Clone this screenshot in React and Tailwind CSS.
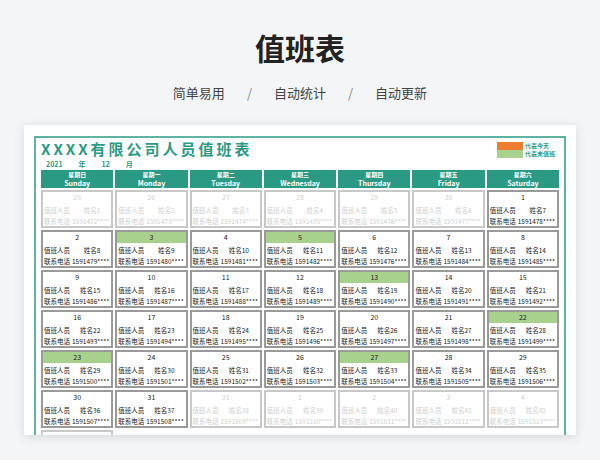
const days=[["星期日","Sunday"],["星期一","Monday"],["星期二","Tuesday"],["星期三","Wednesday"],["星期四","Thursday"],["星期五","Friday"],["星期六","Saturday"]];
const dates=[25,26,27,28,29,30,1,...Array.from({length:30},(_,i)=>i+2),31,1,2,3,4,5];
const green=[3,5,13,22,23,27];
export default function App(){
  return(
  <div className="w-[600px] h-[460px] bg-[#f4f5f7] overflow-hidden" style={{fontFamily:'"Noto Sans CJK SC","Noto Sans",sans-serif'}}>
    <div className="h-[62px] flex items-end justify-center text-[30px] font-bold text-[#222] leading-none">值班表</div>
    <div className="flex justify-center gap-[22px] text-[13px] text-[#444] h-[20px] items-center mt-[21px]">
      <span>简单易用</span><span className="text-[#888]">/</span><span>自动统计</span><span className="text-[#888]">/</span><span>自动更新</span>
    </div>
    <div className="mx-[24px] mt-[22px] h-[310px] bg-white shadow-[0_2px_10px_rgba(0,0,0,0.12)] pt-[11px] px-[10px] overflow-hidden">
      <div className="border-2 border-b-0 border-[#5fb3a3] h-full px-[5px] pt-[1px]">
        <div className="flex justify-between">
          <div>
            <div className="text-[15px] font-bold text-[#2a9a84] tracking-[3px] leading-[19px]">XXXX有限公司人员值班表</div>
            <div className="flex text-[7px] font-bold text-[#2a9a84] gap-[16px] pl-[5px] mt-[2px] leading-[9px]"><span>2021</span><span>年</span><span>12</span><span>月</span></div>
          </div>
          <div className="mt-[3px] mr-[4px] text-[6px] text-[#2a9a84] font-bold leading-[8px]">
            <div className="flex gap-[2px] items-center"><div className="w-[26px] h-[8px] bg-[#ed7d31]"/><span>代表今天</span></div>
            <div className="flex gap-[2px] items-center"><div className="w-[26px] h-[8px] bg-[#a9d18e]"/><span>代表未值班</span></div>
          </div>
        </div>
        <div className="grid grid-cols-7 gap-x-[2px] mt-[1px]">
          {days.map(d=><div key={d[0]} className="bg-[#2a9a84] text-white text-center h-[18px] text-[7px] leading-[8px] pt-[1px] font-bold"><div className="text-[6px]">{d[0]}</div><div>{d[1]}</div></div>)}
        </div>
        <div className="grid grid-cols-7 gap-x-[2px] gap-y-[2px] mt-[2px]">
          {dates.map((d,i)=>{
            const gray=i<6||i>=37;
            const n=i+1, p=1591472+i;
            const phone=i===11?1591476:p;
            const g=!gray&&green.includes(d);
            const tc=gray?"text-[#d0d0d0]":"text-[#222]";
            return(<div key={i} className={"border-2 h-[38px] text-[6.5px] leading-[10px] "+tc+(gray?" border-[#c8c8c8]":" border-[#9a9a9a]")}>
              <div className={"text-center h-[11px] text-[7px] leading-[11px] "+(g?"bg-[#a9d18e]":"")}>{d}</div>
              <div className="flex justify-between pl-[1px] pr-[11px] mt-[2px]"><span>值班人员</span><span>姓名{n}</span></div>
              <div className="flex gap-[2px] pl-[1px] mt-[1px] whitespace-nowrap"><span>联系电话</span><span>{phone}****</span></div>
            </div>)})}
        </div>
      </div>
    </div>
  </div>);
}
